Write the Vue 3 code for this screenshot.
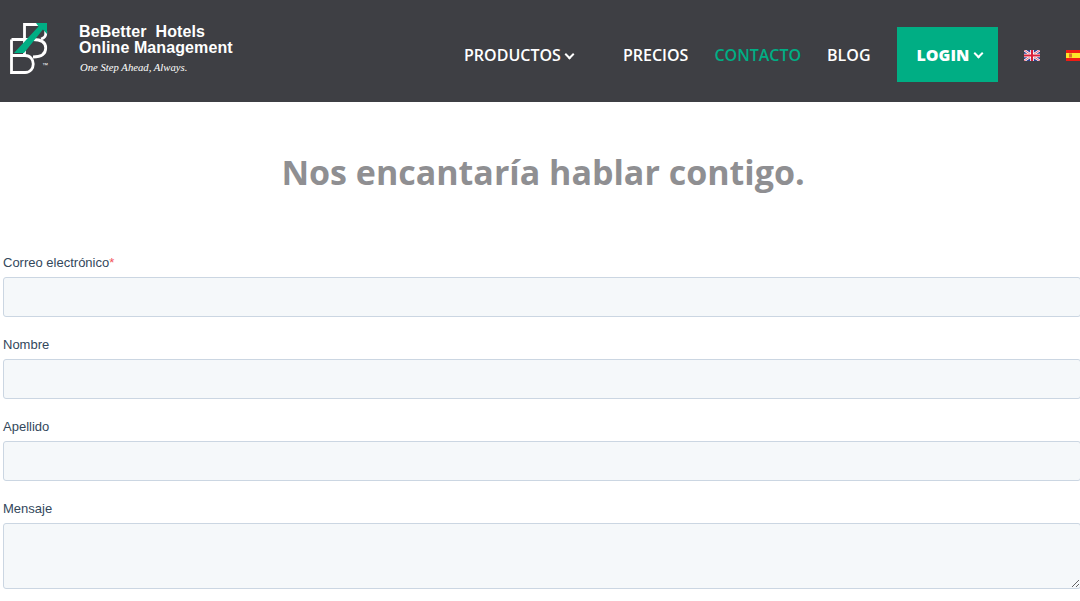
<script setup>
const fields = [
  { label: "Correo electrónico", required: true },
  { label: "Nombre" },
  { label: "Apellido" },
];
</script>

<template>
  <div class="page">
    <header class="topbar">
      <a class="logo">
        <svg class="logo-mark" width="42" height="54" viewBox="0 0 42 54">
          <g fill="none" stroke="#fff" stroke-width="2.8">
            <path d="M15.5 16V2.5H30" />
            <path d="M36.7 9V12C36.7 14.5 35 16 32 17" />
            <path d="M2.5 17.5H24C32 17.5 36.7 20 36.7 26C36.7 32 32 35 24 35" />
            <path d="M15.5 17.5V33.5" />
            <path d="M2.5 17.5V50.5H16C27 50.5 27 33.5 16 33.5H2.5" />
          </g>
          <path d="M27 1H38V12L33.9 7.5L15 31H5L29.5 4.5Z" fill="#00ae84" />
          <text x="33" y="44.5" class="tm">™</text>
        </svg>
        <div class="logo-text">
          <div class="logo-name">BeBetter&nbsp; Hotels<br />Online Management</div>
          <div class="logo-tag">One Step Ahead, Always.</div>
        </div>
      </a>
      <nav class="nav">
        <a class="nav-link products">PRODUCTOS <span class="chev"></span></a>
        <a class="nav-link">PRECIOS</a>
        <a class="nav-link active">CONTACTO</a>
        <a class="nav-link">BLOG</a>
        <a class="login">LOGIN <span class="chev"></span></a>
      </nav>
      <div class="flags">
        <svg width="16" height="11" viewBox="0 0 16 11">
          <rect width="16" height="11" fill="#2f3f92" />
          <path d="M0 0L16 11M16 0L0 11" stroke="#fff" stroke-width="2.4" />
          <path d="M0 0L16 11M16 0L0 11" stroke="#d8324a" stroke-width="0.8" />
          <path d="M8 0V11M0 5.5H16" stroke="#fff" stroke-width="3.6" />
          <path d="M8 0V11M0 5.5H16" stroke="#d8203a" stroke-width="2" />
        </svg>
        <svg width="16" height="11" viewBox="0 0 16 11">
          <rect width="16" height="11" fill="#f01c14" />
          <rect y="3" width="16" height="5" fill="#fde428" />
          <rect x="3" y="3.5" width="3" height="4" fill="#d8742c" />
        </svg>
      </div>
    </header>

    <main class="content">
      <h1 class="title">Nos encantaría hablar contigo.</h1>
      <form class="form">
        <div v-for="f in fields" :key="f.label" class="field">
          <label class="label">{{ f.label }}<span v-if="f.required" class="req">*</span></label>
          <input class="input" type="text" />
        </div>
        <div class="field">
          <label class="label">Mensaje</label>
          <textarea class="input textarea"></textarea>
        </div>
      </form>
    </main>
  </div>
</template>

<style>
html,
body {
  margin: 0;
  background: #fff;
  overflow: hidden;
}
</style>

<style scoped>
.page {
  width: 1080px;
  height: 601px;
  overflow: hidden;
}

.topbar {
  display: flex;
  align-items: center;
  height: 102px;
  background: #3e3f44;
  font-family: "Open Sans", sans-serif;
}

.logo {
  display: flex;
  align-items: flex-start;
  gap: 28px;
  width: 464px;
  margin-bottom: 2px;
  padding-left: 9px;
  box-sizing: border-box;
  flex-shrink: 0;
}

.logo-mark {
  margin-top: -2px;
}

.logo-text {
  color: #fff;
}

.logo-name {
  font-family: "Liberation Sans", sans-serif;
  font-size: 16px;
  font-weight: 700;
  line-height: 16px;
  letter-spacing: 0.1px;
}

.logo-tag {
  margin: 4px 0 2px 1px;
  font-family: "Liberation Serif", serif;
  font-size: 10.7px;
  font-style: italic;
  line-height: 14px;
}

.tm {
  fill: #fff;
  font-family: "Liberation Sans", sans-serif;
  font-size: 6px;
}

.nav {
  display: flex;
  align-items: center;
  flex-shrink: 0;
  margin-top: 6px;
}

.nav-link {
  margin-right: 26px;
  padding-top: 2px;
  color: #fff;
  font-size: 16px;
  font-weight: 600;
  white-space: nowrap;
}

.products {
  margin-right: 48px;
}

.active {
  color: #00ae84;
}

.login {
  display: flex;
  align-items: center;
  gap: 5px;
  width: 101px;
  height: 55px;
  box-sizing: border-box;
  padding: 2px 0 0 20px;
  background: #00ae84;
  color: #fff;
  font-size: 16px;
  font-weight: 800;
}

.chev {
  display: inline-block;
  width: 5px;
  height: 5px;
  margin: 0 2px 4px 1px;
  border-right: 2px solid #fff;
  border-bottom: 2px solid #fff;
  transform: rotate(45deg);
  vertical-align: middle;
}

.flags {
  display: flex;
  gap: 26px;
  margin: 9px 0 0 26px;
  flex-shrink: 0;
}

.title {
  width: 1086px;
  margin: 47px 0 58px;
  color: #8f8f92;
  font-family: "Open Sans", sans-serif;
  font-size: 34px;
  font-weight: 700;
  line-height: 46px;
  text-align: center;
}

.form {
  width: 1078px;
  margin-left: 3px;
}

.field {
  margin-bottom: 18px;
}

.label {
  display: block;
  margin-bottom: 4px;
  color: #33475b;
  font-family: "Liberation Sans", Arial, sans-serif;
  font-size: 13px;
  line-height: 20px;
}

.req {
  color: #f2545b;
}

.input {
  display: block;
  width: 100%;
  height: 40px;
  box-sizing: border-box;
  padding: 0 15px;
  background: #f5f8fa;
  border: 1px solid #cbd6e2;
  border-radius: 3px;
  font-family: "Liberation Sans", Arial, sans-serif;
  font-size: 16px;
}

.textarea {
  height: 66px;
}
</style>
